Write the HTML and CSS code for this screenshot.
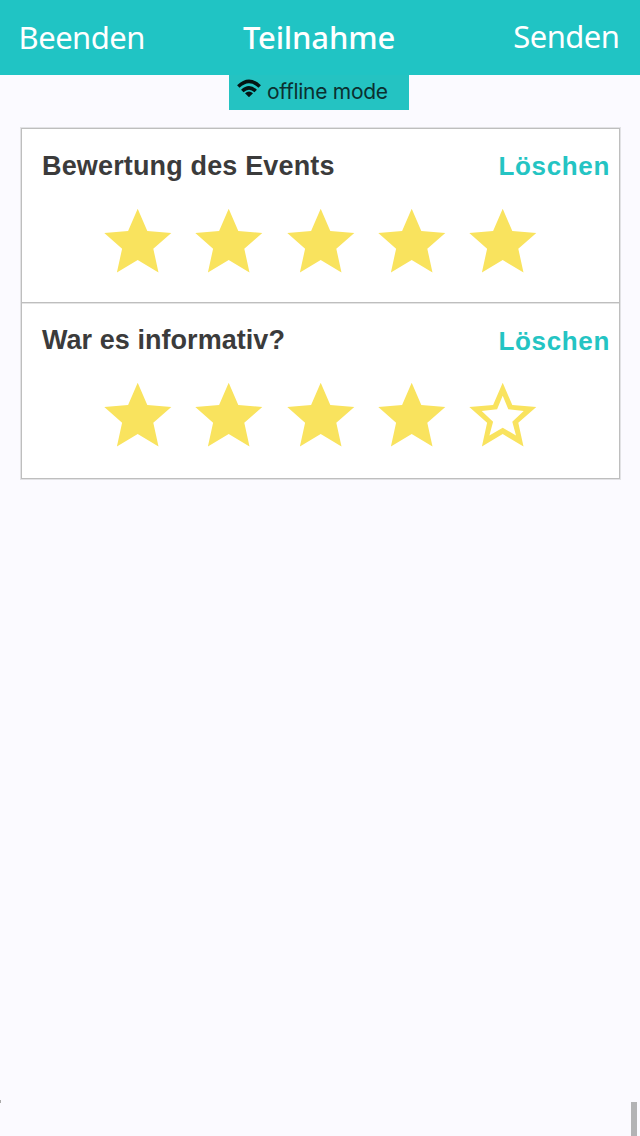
FILE: index.html
```html
<!DOCTYPE html>
<html lang="de">
<head>
<meta charset="utf-8">
<title>Teilnahme</title>
<link rel="stylesheet" href="styles.css">
</head>
<body>
<svg width="0" height="0" class="defs">
  <symbol id="star" viewBox="0 0 68 66"><path d="M33.700.8 43.300 23l24 2-18 15.700 5.200 23.800L33.700 52 12.900 64.500l5.200-23.800L.3 25l23.800-2z"/></symbol>
  <symbol id="star-empty" viewBox="0 0 68 66"><path fill-rule="evenodd" d="M33.700.8 43.300 23l24 2-18 15.700 5.200 23.800L33.700 52 12.900 64.500l5.200-23.800L.3 25l23.800-2zM33.700 13.800 28.100 27.200 12.700 29l11.400 10.800-3.700 13.600 13.300-7.600L47 53.400l-3.700-13.600L54.700 29l-15.400-1.800z"/></symbol>
</svg>
<header class="bar">
  <span class="action">Beenden</span>
  <h1 class="title">Teilnahme</h1>
  <span class="action send">Senden</span>
</header>
<div class="status">
  <svg class="wifi" width="24" height="18" viewBox="0 0 24 18" fill="none" stroke="#041414" stroke-width="3.500">
    <path d="M1.300 7.500Q12-2.700 22.700 7.500M5.300 12Q12 5.600 18.700 12"/>
    <path d="M8 14.300q4-3.600 8 0L12 18.200z" fill="#041414" stroke="none"/>
  </svg>
  <span class="mode">offline mode</span>
</div>
<main class="list">
  <section class="question">
    <div class="row"><h2 class="label">Bewertung des Events</h2><span class="clear">Löschen</span></div>
    <div class="stars">
      <svg class="star"><use href="#star"/></svg>
      <svg class="star"><use href="#star"/></svg>
      <svg class="star"><use href="#star"/></svg>
      <svg class="star"><use href="#star"/></svg>
      <svg class="star"><use href="#star"/></svg>
    </div>
  </section>
  <section class="question">
    <div class="row"><h2 class="label second">War es informativ?</h2><span class="clear">Löschen</span></div>
    <div class="stars">
      <svg class="star"><use href="#star"/></svg>
      <svg class="star"><use href="#star"/></svg>
      <svg class="star"><use href="#star"/></svg>
      <svg class="star"><use href="#star"/></svg>
      <svg class="star"><use href="#star-empty"/></svg>
    </div>
  </section>
</main>
<footer class="bottom"><i class="speck"></i><i class="thumb"></i></footer>
</body>
</html>
```
FILE: styles.css
```css
* { box-sizing: border-box; }
body {
  margin: 0;
  height: 1136px;
  display: flex;
  flex-direction: column;
  background: #fbfaff;
  font-family: "Liberation Sans", Arial, sans-serif;
  overflow: hidden;
}
.defs { position: absolute; }
.bar {
  height: 75px;
  flex: none;
  display: grid;
  grid-template-columns: 1fr auto 1fr;
  align-items: center;
  padding: 0 20.5px 0 18.5px;
  background: #20c4c4;
  color: #fff;
  font-family: "Noto Sans", "Open Sans", sans-serif;
  line-height: 44px;
}
.action { font-size: 31px; font-weight: 400; letter-spacing: -0.5px; margin-top: -1px; }
.send { text-align: right; margin-top: -3px; }
.title { margin: -2px 0 0; font-size: 31px; font-weight: 500; letter-spacing: -0.15px; }
.status {
  width: 180px;
  height: 35px;
  margin-left: 229px;
  flex: none;
  display: flex;
  padding: 4px 0 0 8px;
  background: #24c3c2;
}
.wifi { flex: none; margin-right: 6px; }
.mode {
  font-family: Inter, sans-serif;
  font-size: 21px;
  line-height: 26px;
  letter-spacing: -0.28px;
  color: #0b3030;
  white-space: nowrap;
}
.list {
  width: 599px;
  height: 351px;
  margin: 18px 0 0 21px;
  flex: none;
  border: 1px solid #bebebe;
  box-shadow: 0 0 0 1px #e2e2e5;
  background: #fff;
}
.question { height: 173px; }
.question + .question {
  height: 176px;
  border-top: 1px solid #bebebe;
  box-shadow: inset 0 1px #e4e4e4;
}
.question + .question .stars { padding-top: 26px; }
.question + .question .clear { padding-top: 1px; }
.row {
  display: flex;
  justify-content: space-between;
  height: 53px;
  padding: 21px 9px 0 20px;
  line-height: 32px;
}
.label { margin: 0; font-size: 27px; font-weight: 700; color: #3b3b3b; letter-spacing: 0.15px; }
.second { letter-spacing: 0.05px; }
.clear { font-size: 26px; font-weight: 700; color: #24c4c3; letter-spacing: 0.65px; }
.stars {
  display: flex;
  gap: 23.3px;
  padding: 26px 0 0 82px;
}
.star { width: 68px; height: 66px; flex: none; fill: #f9e35e; }
.bottom {
  height: 36px;
  margin-top: auto;
  display: flex;
  justify-content: space-between;
  padding-right: 3px;
}
.speck { width: 1px; height: 3px; background: #aaa; }
.thumb { width: 6px; height: 35px; margin-top: 2px; background: #b3b3b5; }
```
